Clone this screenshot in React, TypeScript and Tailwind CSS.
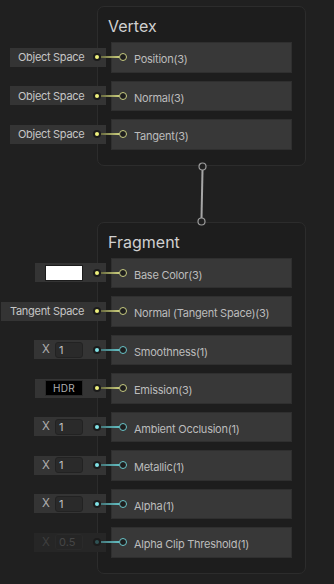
type Kind = 'vec' | 'float';

type Port = {
  label: string;
  kind: Kind;
  input: React.ReactNode;
  disabled?: boolean;
};

const tone = {
  vec: { dot: 'bg-[#eef07c]', wire: 'from-[#6a6c40] to-[#cacd7c]', ring: 'border-[#c8cc82]' },
  float: { dot: 'bg-[#80e2e6]', wire: 'from-[#44787b] to-[#62bec2]', ring: 'border-[#6ac6ca]' },
};

function Field({ value, disabled }: { value: string; disabled?: boolean }) {
  return (
    <div className={`flex items-center gap-[6px] ${disabled ? 'text-[#3e3e3e]' : 'text-[#aeaeae]'}`}>
      <span className="w-[7px] text-[11.5px] leading-none">X</span>
      <div
        className={`w-[28px] h-[16px] rounded-[3px] border pl-[3px] text-[11px] leading-[14px] ${
          disabled ? 'bg-[#252525] border-[#2a2a2a] text-[#454545]' : 'bg-[#2a2a2a] border-[#222] text-[#c0c0c0]'
        }`}
      >
        {value}
      </div>
    </div>
  );
}

function InputBox({ children, width, pl, kind, disabled }: { children: React.ReactNode; width: string; pl: string; kind: Kind; disabled?: boolean }) {
  return (
    <div
      className={`${width} ${pl} h-[19px] pr-[5px] flex items-center justify-between ${
        disabled ? 'bg-[#262626]' : 'bg-[#343434]'
      }`}
    >
      {children}
      <span className="w-[8px] h-[8px] rounded-full bg-[#1b1b1b] flex items-center justify-center">
        <span className={`w-[4px] h-[4px] rounded-full ${disabled ? 'bg-[#2f5254]' : tone[kind].dot}`} />
      </span>
    </div>
  );
}

function Row({ port }: { port: Port }) {
  const t = tone[port.kind];
  return (
    <div className="relative flex items-center -ml-[111px] h-[30.5px]">
      <div className="w-[111px] shrink-0 flex justify-end pr-[5px]">{port.input}</div>
      <div className="flex-1 h-full bg-[#383838] border border-[#2f2f2f] flex items-center pl-[7px]">
        <span className={`w-[8px] h-[8px] rounded-full border-[1.5px] ${t.ring} bg-[#1e1e1e]`} />
        <span className="ml-[7px] mt-[4px] text-[11px] tracking-[-0.25px] text-[#bcbcbc]">{port.label}</span>
      </div>
      <div className={`absolute left-[101px] top-1/2 -translate-y-1/2 w-[18px] h-[2px] bg-gradient-to-r ${t.wire}`} />
    </div>
  );
}

function Node({ title, ports }: { title: string; ports: Port[] }) {
  return (
    <div className="ml-[97px] w-[209px] rounded-[7px] border border-[#2c2c2c] bg-[#1d1d1d] pt-[9px] pb-[15px] px-[13px]">
      <div className="-ml-[3px] mb-[6px] text-[16px] leading-[20px] text-[#d0d0d0]">{title}</div>
      <div className="flex flex-col gap-[8px]">
        {ports.map((p) => (
          <Row key={p.label} port={p} />
        ))}
      </div>
    </div>
  );
}

const space = (text: string, width: string, pl: string) => (
  <InputBox width={width} pl={pl} kind="vec">
    <span className="text-[11px] tracking-[-0.3px] text-[#c6c6c6]">{text}</span>
  </InputBox>
);

const float = (value: string, disabled?: boolean) => (
  <InputBox width="w-[72px]" pl="pl-[8px]" kind="float" disabled={disabled}>
    <Field value={value} disabled={disabled} />
  </InputBox>
);

const vertex: Port[] = [
  { label: 'Position(3)', kind: 'vec', input: space('Object Space', 'w-[96px]', 'pl-[8px]') },
  { label: 'Normal(3)', kind: 'vec', input: space('Object Space', 'w-[96px]', 'pl-[8px]') },
  { label: 'Tangent(3)', kind: 'vec', input: space('Object Space', 'w-[96px]', 'pl-[8px]') },
];

const fragment: Port[] = [
  {
    label: 'Base Color(3)',
    kind: 'vec',
    input: (
      <InputBox width="w-[71px]" pl="pl-[10px]" kind="vec">
        <div className="w-[38px] h-[16px] bg-white border border-[#1c1c1c]" />
      </InputBox>
    ),
  },
  { label: 'Normal (Tangent Space)(3)', kind: 'vec', input: space('Tangent Space', 'w-[105px]', 'pl-[9px]') },
  { label: 'Smoothness(1)', kind: 'float', input: float('1') },
  {
    label: 'Emission(3)',
    kind: 'vec',
    input: (
      <InputBox width="w-[71px]" pl="pl-[10px]" kind="vec">
        <div className="w-[38px] h-[16px] bg-black border border-[#2a2a2a] flex items-center justify-center text-[10px] text-[#b0b0b0] tracking-wide">
          HDR
        </div>
      </InputBox>
    ),
  },
  { label: 'Ambient Occlusion(1)', kind: 'float', input: float('1') },
  { label: 'Metallic(1)', kind: 'float', input: float('1') },
  { label: 'Alpha(1)', kind: 'float', input: float('1') },
  { label: 'Alpha Clip Threshold(1)', kind: 'float', input: float('0.5', true), disabled: true },
];

export default function App() {
  return (
    <div className="w-[334px] h-[584px] overflow-hidden bg-[#202020] pt-[6px] font-['Inter',sans-serif]">
      <Node title="Vertex" ports={vertex} />

      {/* flow edge between the two blocks */}
      <div className="relative z-10 -my-[4px] ml-[196px] w-[12px] h-[64px]">
        <svg width="12" height="64" viewBox="0 0 12 64">
          <line x1="6.5" y1="8" x2="5.5" y2="56" stroke="#a6a6a6" strokeWidth="2" />
          <circle cx="6.5" cy="4.5" r="3.5" fill="#202020" stroke="#9c9c9c" strokeWidth="1.2" />
          <circle cx="5.5" cy="59.5" r="3.5" fill="#202020" stroke="#9c9c9c" strokeWidth="1.2" />
        </svg>
      </div>

      <Node title="Fragment" ports={fragment} />
    </div>
  );
}
